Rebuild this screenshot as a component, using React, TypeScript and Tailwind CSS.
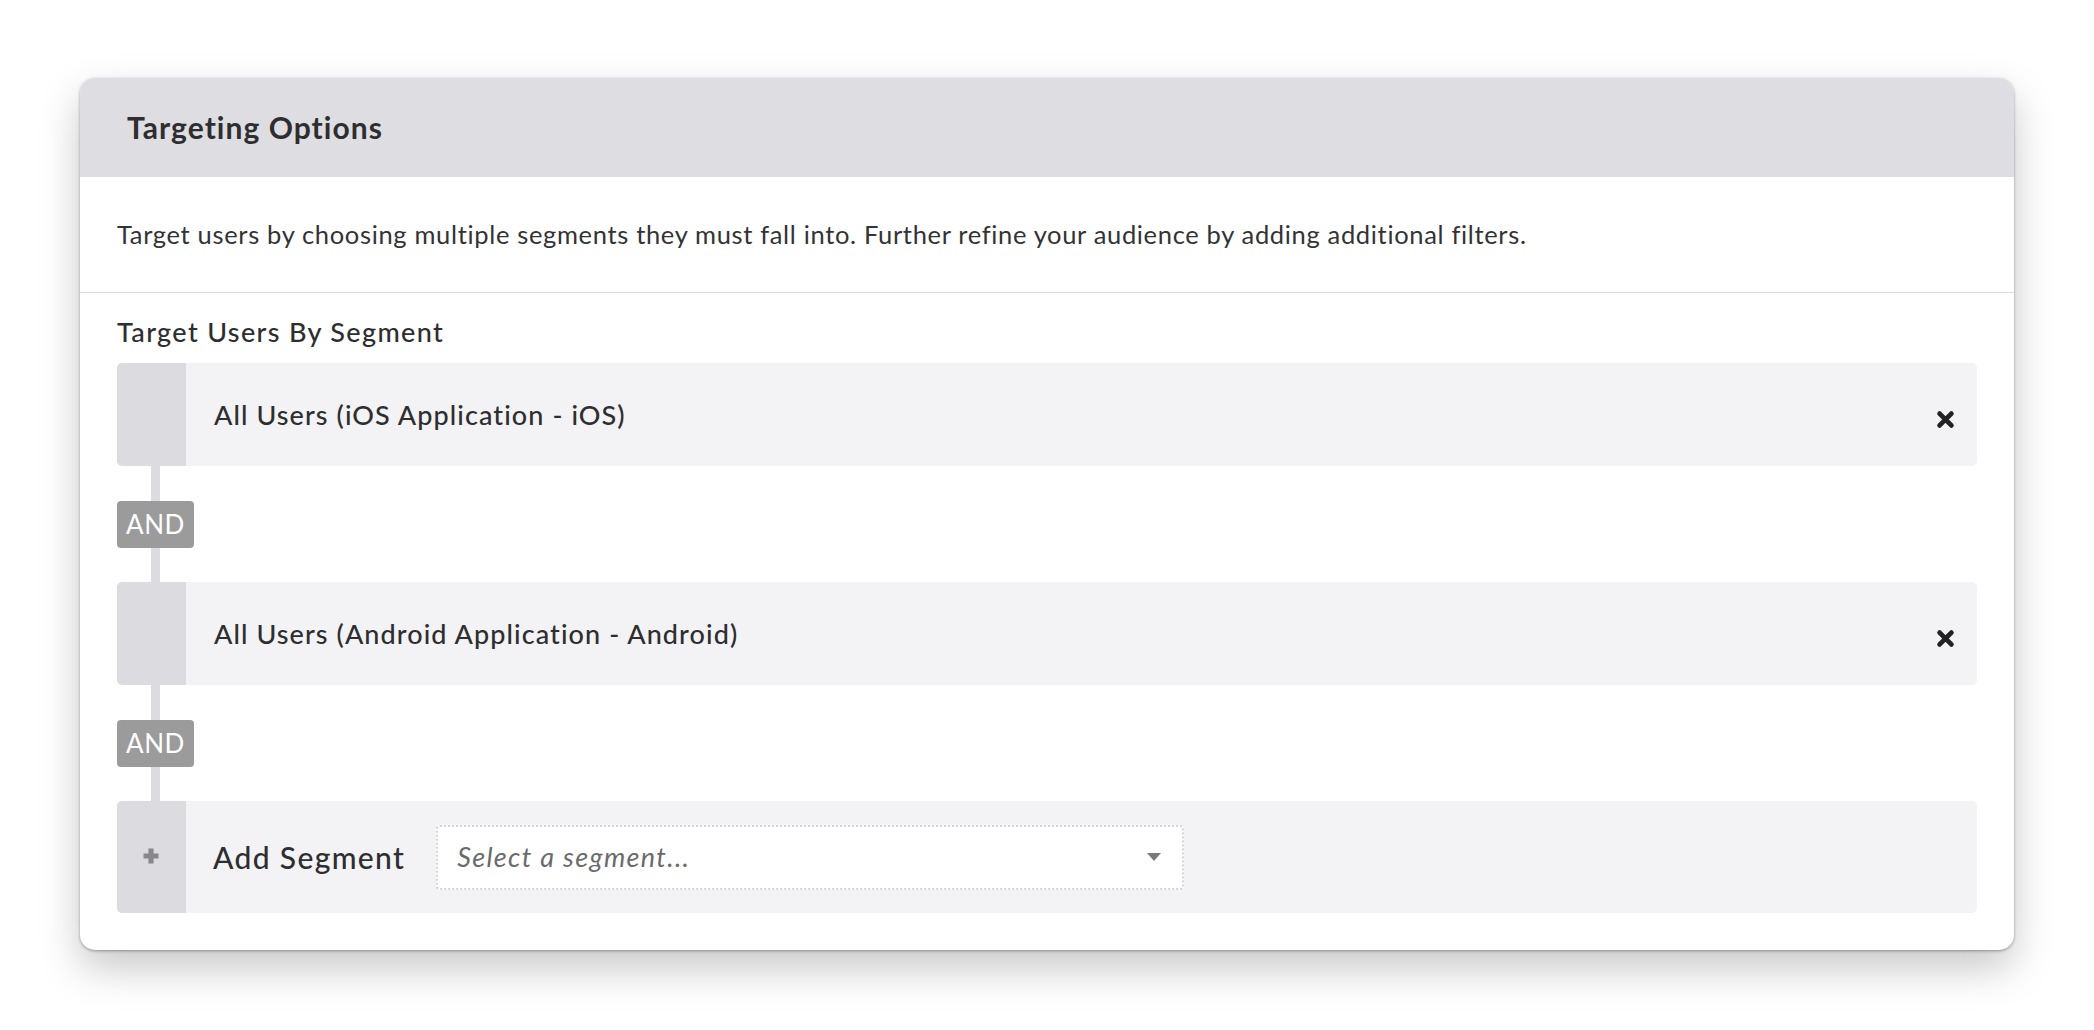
import React from "react";

function XIcon() {
  return (
    <svg width="19" height="19" viewBox="0 0 19 19" aria-hidden="true" className="mt-[9px]">
      <path d="M3.6 3.6 L15.4 15.4 M15.4 3.6 L3.6 15.4" stroke="#222224" strokeWidth="4.8" strokeLinecap="round" fill="none" />
    </svg>
  );
}

function PlusIcon() {
  return (
    <svg width="18" height="18" viewBox="0 0 18 18" aria-hidden="true">
      <path d="M9 1.5 V16.5 M1.5 9 H16.5" stroke="#88888b" strokeWidth="5.2" fill="none" />
    </svg>
  );
}

function Connector() {
  return (
    <div className="flex h-[116px] w-[77px] flex-col items-center">
      <div className="w-[9px] flex-1 bg-[#dcdce0]" />
      <div className="flex h-[47px] w-[77px] items-center justify-center rounded-[4px] bg-[#9b9b9c] text-[26px] tracking-[0.02em] text-white">
        AND
      </div>
      <div className="w-[9px] flex-1 bg-[#dcdce0]" />
    </div>
  );
}

function SegmentRow({ label }: { label: string }) {
  return (
    <div className="flex h-[103px] overflow-hidden rounded-[5px] bg-[#f3f3f5]">
      <div className="w-[69px] shrink-0 bg-[#dcdce0]" />
      <div className="flex flex-1 items-center justify-between pl-[28px] pr-[22px]">
        <span className="mt-[2px] text-[27px] font-medium tracking-[0.04em] text-[#2e2e30]">{label}</span>
        <XIcon />
      </div>
    </div>
  );
}

export default function App() {
  return (
    <div
      className="min-h-[1030px] bg-white px-[80px] pt-[78px]"
      style={{ fontFamily: "Lato, 'Noto Sans', sans-serif" }}
    >
      <div className="overflow-hidden rounded-[15px] bg-white shadow-[0_1px_3px_rgba(0,0,0,0.35),0_18px_40px_rgba(0,0,0,0.22)]">
        <div className="flex h-[99px] items-center bg-[#dedde2] pl-[47px]">
          <h2 className="text-[30px] font-bold tracking-[0.035em] text-[#2e2e30]">Targeting Options</h2>
        </div>
        <div className="flex h-[116px] items-center border-b border-[#dcdcde] px-[37px]">
          <p className="text-[25.5px] tracking-[0.026em] text-[#333335]">
            Target users by choosing multiple segments they must fall into. Further refine your audience by adding additional filters.
          </p>
        </div>
        <div className="px-[37px] pb-[37px]">
          <div className="pt-[23px] pb-[15px] text-[27px] font-medium leading-[32px] tracking-[0.05em] text-[#2e2e30]">
            Target Users By Segment
          </div>
          <SegmentRow label="All Users (iOS Application - iOS)" />
          <Connector />
          <SegmentRow label="All Users (Android Application - Android)" />
          <Connector />
          <div className="flex h-[112px] overflow-hidden rounded-[5px] bg-[#f3f3f5]">
            <div className="flex w-[69px] shrink-0 items-center justify-center bg-[#dcdce0] pr-[2px] pb-[2px]">
              <PlusIcon />
            </div>
            <div className="flex flex-1 items-center pl-[27px]">
              <span className="text-[30px] font-medium tracking-[0.045em] text-[#2e2e30]">Add Segment</span>
              <div className="ml-[31px] flex h-[65px] w-[748px] items-center justify-between rounded-[4px] border-2 border-dotted border-[#d4d4d8] bg-white pl-[19px] pr-[20px]">
                <span className="text-[27px] italic tracking-[0.05em] text-[#6a6a6d]">Select a segment...</span>
                <svg width="16" height="10" viewBox="0 0 16 10" aria-hidden="true">
                  <path d="M1 1 H15 L8 9 Z" fill="#7a7a7d" />
                </svg>
              </div>
            </div>
          </div>
        </div>
      </div>
    </div>
  );
}
